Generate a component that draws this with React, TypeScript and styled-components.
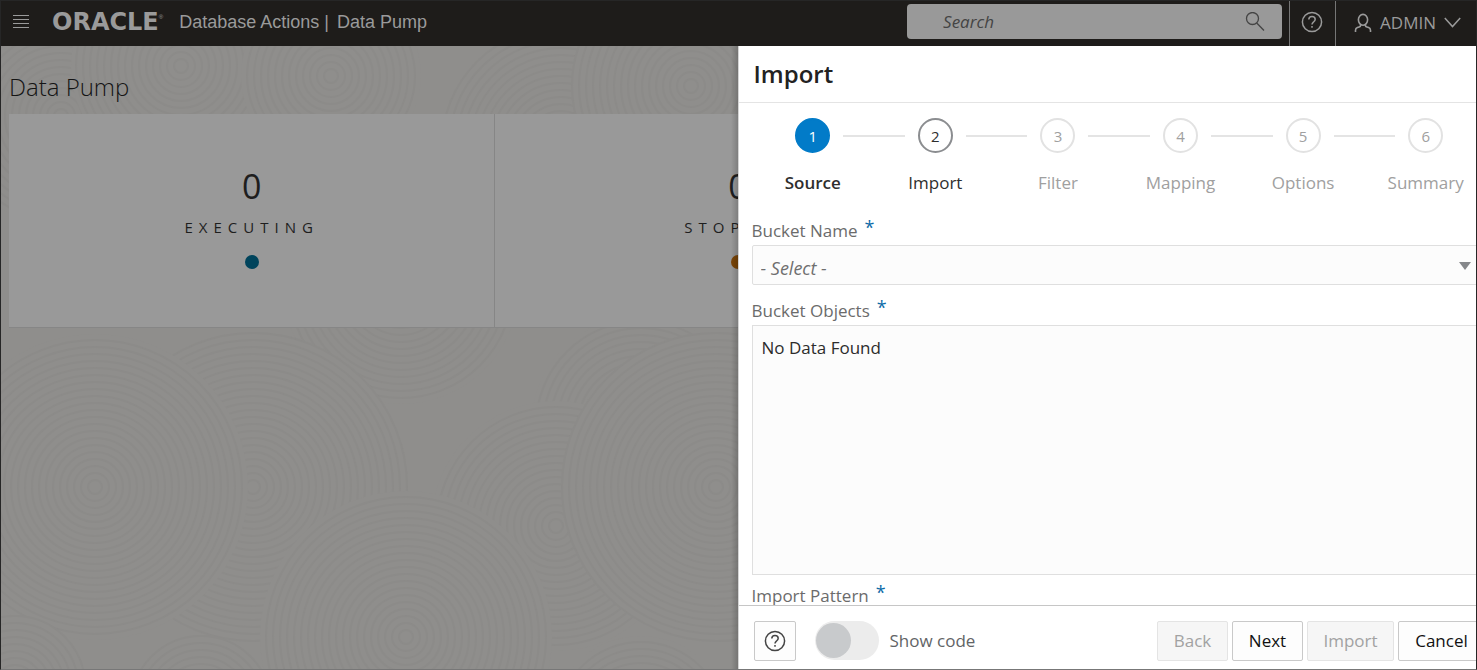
import React from "react";
import styled, { createGlobalStyle, css } from "styled-components";

const GlobalStyle = createGlobalStyle`
  *, *::before, *::after { box-sizing: border-box; }
  body {
    margin: 0;
    font-family: "Open Sans", "Noto Sans", sans-serif;
    font-size: 17px;
    line-height: 24px;
    color: #222;
  }
  button, input, select { font: inherit; color: inherit; margin: 0; }
`;

/* ---------- page frame ---------- */

const Page = styled.div`
  position: relative;
  display: flex;
  flex-direction: column;
  min-height: 100vh;
  overflow: hidden;
  border: 1px solid #262626;
  border-bottom-color: #777;
  background: #8f8e8c;
`;

const TopBar = styled.header`
  display: flex;
  align-items: stretch;
  height: 45px;
  background: #1e1c1a;
  color: #9a9a9a;
`;

const MenuButton = styled.button`
  display: flex;
  align-items: center;
  padding: 0 12px 4px;
  border: 0;
  background: none;
`;

const Brand = styled.div`
  display: flex;
  align-items: center;
  flex: 1;
  padding-left: 10px;
  padding-bottom: 4px;
  font-family: "Liberation Sans", Arial, sans-serif;
  font-size: 18px;
  white-space: nowrap;
`;

const Wordmark = styled.span`
  font-family: "DejaVu Sans", sans-serif;
  font-size: 24px;
  font-weight: 700;
`;

const Registered = styled.sup`
  align-self: flex-start;
  margin-right: 16px;
  font-size: 6px;
  line-height: 32px;
`;

const AppName = styled.span`
  margin-right: 8px;
`;

const SearchBox = styled.label`
  display: flex;
  align-items: center;
  align-self: flex-start;
  width: 375px;
  height: 35px;
  margin: 3px 7px 0 0;
  padding: 0 17px 0 36px;
  border-radius: 4px;
  background: #999;
  color: #444;
`;

const SearchInput = styled.input`
  flex: 1;
  min-width: 0;
  padding: 0;
  border: 0;
  outline: 0;
  background: none;
  font-style: italic;
  &::placeholder { color: #444; opacity: 1; }
`;

const BarButton = styled.button`
  display: flex;
  align-items: center;
  gap: 8px;
  padding: 0 12px 4px 11px;
  border: 0;
  border-left: 1px solid #767676;
  background: none;
`;

const UserButton = styled(BarButton)`
  padding: 0 15px 2px 18px;
`;

/* ---------- dashboard ---------- */

const Dashboard = styled.main`
  position: relative;
  flex: 1;
  padding: 24px 8px 0;
`;

const Backdrop = styled.svg`
  position: absolute;
  inset: 0;
  width: 100%;
  height: 100%;
`;

const PageTitle = styled.h1`
  position: relative;
  margin: 0 0 10px;
  font-size: 24px;
  line-height: 34px;
  font-weight: 300;
  color: #141414;
`;

const Cards = styled.section`
  position: relative;
  display: grid;
  grid-template-columns: repeat(3, 1fr);
`;

const Card = styled.article`
  display: flex;
  flex-direction: column;
  align-items: center;
  height: 214px;
  padding-top: 52px;
  border-right: 1px solid #868686;
  border-bottom: 1px solid #868686;
  background: #999;
  color: #1e1e1e;
`;

const Count = styled.strong`
  font-size: 34px;
  line-height: 40px;
  font-weight: 400;
`;

const CardLabel = styled.span`
  margin-top: 9px;
  font-size: 15px;
  letter-spacing: 6px;
`;

const Dot = styled.i<{ $color: string }>`
  width: 14px;
  height: 14px;
  margin-top: 16px;
  border-radius: 50%;
  background: ${(p) => p.$color};
`;

/* ---------- import drawer ---------- */

const Drawer = styled.aside`
  position: absolute;
  top: 45px;
  right: 0;
  bottom: 0;
  display: flex;
  flex-direction: column;
  width: calc(50% + 1px);
  overflow: hidden;
  border-left: 1px solid #d4d4d4;
  background: #fff;
`;

const DrawerShade = styled.div`
  position: absolute;
  top: 45px;
  right: 50%;
  bottom: 0;
  width: 8px;
  background: linear-gradient(to right, rgba(0, 0, 0, 0), rgba(0, 0, 0, 0.2));
`;

const DrawerTitle = styled.h2`
  flex: none;
  margin: 0;
  padding: 12px 15px;
  border-bottom: 1px solid #e4e4e4;
  font-size: 24px;
  line-height: 32px;
  font-weight: 600;
`;

const Steps = styled.ol`
  display: flex;
  flex: none;
  margin: 0 -11px 0 13px;
  padding: 15px 0 0;
  list-style: none;
`;

type StepState = "current" | "next" | "later";

const Step = styled.li<{ $state: StepState }>`
  flex: 1;
  text-align: center;
  color: ${(p) => (p.$state === "later" ? "#a0a0a0" : "#2e2e2e")};
  font-weight: ${(p) => (p.$state === "current" ? 600 : 400)};
`;

const StepTrack = styled.div`
  display: flex;
  align-items: center;
  gap: 13px;
  margin-bottom: 18px;
`;

const TrackLine = styled.span<{ $hidden: boolean }>`
  flex: 1;
  height: 2px;
  background: ${(p) => (p.$hidden ? "transparent" : "#e4e4e4")};
`;

const StepNumber = styled.span<{ $state: StepState }>`
  width: 35px;
  height: 35px;
  border: 2px solid #e2e2e2;
  border-radius: 50%;
  font-size: 15px;
  line-height: 33px;
  font-weight: 400;
  ${(p) => p.$state === "next" && css`border-color: #8b8d90;`}
  ${(p) => p.$state === "current" && css`
    border-color: #027bc8;
    background: #027bc8;
    color: #fff;
  `}
`;

const Form = styled.form`
  flex: 1 1 0;
  min-height: 0;
  overflow: hidden;
  padding: 24px 0 0 13px;
`;

const Field = styled.div`
  margin-right: -3px;
`;

const FieldLabel = styled.label`
  display: flex;
  gap: 7px;
  height: 26px;
  color: #6b6b6b;
`;

const Required = styled.span`
  color: #0e6ba8;
  font-size: 18px;
  line-height: 16px;
`;

const SelectWrap = styled.div`
  display: flex;
  align-items: center;
  height: 40px;
  margin-bottom: 14px;
  padding-right: 7px;
  border: 1px solid #dfdfdf;
  border-radius: 2px;
  background: #fcfcfc;
`;

const Select = styled.select`
  flex: 1;
  height: 100%;
  padding: 5px 8px 0;
  border: 0;
  outline: 0;
  appearance: none;
  background: none;
  color: #6f6f6f;
  font-size: 18px;
  font-style: italic;
`;

const ObjectList = styled.output`
  display: block;
  height: 250px;
  margin-bottom: 9px;
  padding: 10px 9px;
  border: 1px solid #dfdfdf;
  background: #fcfcfc;
  color: #2c2c2c;
`;

const Footer = styled.footer`
  display: flex;
  flex: none;
  align-items: center;
  gap: 4px;
  height: 64px;
  margin-right: -9px;
  padding: 8px 0 2px 15px;
  border-top: 1px solid #c6c6c6;
`;

const Button = styled.button<{ $wide?: boolean }>`
  display: flex;
  align-items: center;
  justify-content: center;
  min-width: ${(p) => (p.$wide ? 87 : 71)}px;
  height: 40px;
  padding: 0;
  border: 1px solid #c9c9c9;
  border-radius: 2px;
  background: #fdfdfd;
  color: #111;
  &:disabled {
    border-color: #e4e4e4;
    background: #f6f6f6;
    color: #a2a2a2;
  }
`;

const HelpButton = styled(Button)`
  min-width: 42px;
  margin-right: 15px;
  color: #444;
`;

const Toggle = styled.label`
  display: flex;
  align-items: center;
  gap: 11px;
  margin-right: auto;
  color: #626466;
`;

const Switch = styled.input`
  display: flex;
  align-items: center;
  appearance: none;
  width: 64px;
  height: 39px;
  padding: 1px;
  border-radius: 20px;
  background: #ececec;
  &::before {
    content: "";
    width: 35px;
    height: 35px;
    border-radius: 50%;
    background: #c8cacc;
  }
  &:checked { justify-content: flex-end; }
`;

/* ---------- drawings ---------- */

const HelpIcon = ({ size = 22 }: { size?: number }) => (
  <svg width={size} height={size} viewBox="0 0 22 22" fill="none" stroke="currentColor" strokeWidth="1.5">
    <circle cx="11" cy="11" r="9.6" />
    <path d="M7.8 8.6c0-2 1.4-3.2 3.2-3.2s3.2 1.2 3.2 2.900c0 1.500-.9 2.100-1.800 2.800-.9.7-1.400 1.200-1.400 2.500" />
    <path d="M11 15v1.700" />
  </svg>
);

const MenuIcon = () => (
  <svg width="17" height="14" viewBox="0 0 17 14" fill="none" stroke="currentColor">
    <path d="M0 .5h16M0 4.500h16M0 8.500h16M0 12.500h16" />
  </svg>
);

const SearchIcon = () => (
  <svg width="20" height="20" viewBox="0 0 20 20" fill="none" stroke="currentColor" strokeWidth="1.300">
    <circle cx="7.500" cy="6.500" r="6" />
    <path d="M11.700 11l7.300 7.500" />
  </svg>
);

const UserIcon = () => (
  <svg width="18" height="20" viewBox="0 0 18 20" fill="none" stroke="currentColor" strokeWidth="1.600">
    <ellipse cx="9" cy="6.800" rx="4.600" ry="5.400" />
    <path d="M6.600 11.600c.2 1.300-.3 2-1.500 2.400l-1.700.6c-1.300.5-1.900 1.300-1.900 2.600V19M11.400 11.600c-.2 1.300.3 2 1.500 2.400l1.700.6c1.300.5 1.900 1.300 1.900 2.600V19" />
  </svg>
);

const ChevronIcon = () => (
  <svg width="17" height="11" viewBox="0 0 17 11" fill="none" stroke="currentColor" strokeWidth="1.500">
    <path d="M.8 1l7.700 8.600L16.200 1" />
  </svg>
);

const TriangleIcon = () => (
  <svg width="12" height="10" viewBox="0 0 12 10" fill="#85878a">
    <path d="M0 2h12L6 10z" />
  </svg>
);

const ripples = [
  { x: 60, y: 70, r: 110 },
  { x: 560, y: 100, r: 120 },
  { x: 180, y: 20, r: 110 },
  { x: 400, y: 240, r: 118 },
  { x: 330, y: 30, r: 90 },
  { x: 690, y: 40, r: 120 },
  { x: 640, y: 380, r: 110 },
  { x: 555, y: 480, r: 125 },
  { x: 715, y: 441, r: 155 },
  { x: 252, y: 441, r: 155 },
  { x: 94, y: 441, r: 153 },
  { x: 405, y: 591, r: 146 },
  { x: 14, y: 640, r: 70 },
  { x: 200, y: 660, r: 70 },
  { x: 640, y: 680, r: 90 },
];

const RippleBackdrop = () => (
  <Backdrop aria-hidden="true">
    {ripples.map((c) => (
      <g key={`${c.x}-${c.y}`} fill="none" stroke="#8c8b89" strokeWidth="2">
        <circle cx={c.x} cy={c.y} r={c.r} fill="#8f8e8c" stroke="none" />
        {Array.from({ length: Math.floor(c.r / 7) }, (_, i) => (
          <circle key={i} cx={c.x} cy={c.y} r={(i + 1) * 7} />
        ))}
      </g>
    ))}
  </Backdrop>
);

/* ---------- data ---------- */

const cards = [
  { label: "EXECUTING", count: 0, color: "#00445c" },
  { label: "STOPPED", count: 0, color: "#7a4508" },
  { label: "COMPLETED", count: 0, color: "#35521f" },
];

const steps: { label: string; state: StepState }[] = [
  { label: "Source", state: "current" },
  { label: "Import", state: "next" },
  { label: "Filter", state: "later" },
  { label: "Mapping", state: "later" },
  { label: "Options", state: "later" },
  { label: "Summary", state: "later" },
];

export default function App() {
  return (
    <>
      <GlobalStyle />
      <Page>
        <TopBar>
          <MenuButton type="button" aria-label="Menu">
            <MenuIcon />
          </MenuButton>
          <Brand>
            <Wordmark>ORACLE</Wordmark>
            <Registered>®</Registered>
            <AppName>Database Actions |</AppName>
            <span>Data Pump</span>
          </Brand>
          <SearchBox>
            <SearchInput type="text" placeholder="Search" aria-label="Search" />
            <SearchIcon />
          </SearchBox>
          <BarButton type="button" aria-label="Help">
            <HelpIcon />
          </BarButton>
          <UserButton type="button">
            <UserIcon />
            ADMIN
            <ChevronIcon />
          </UserButton>
        </TopBar>

        <Dashboard>
          <RippleBackdrop />
          <PageTitle>Data Pump</PageTitle>
          <Cards>
            {cards.map((card) => (
              <Card key={card.label}>
                <Count>{card.count}</Count>
                <CardLabel>{card.label}</CardLabel>
                <Dot $color={card.color} />
              </Card>
            ))}
          </Cards>
        </Dashboard>

        <DrawerShade />
        <Drawer aria-labelledby="drawer-title">
          <DrawerTitle id="drawer-title">Import</DrawerTitle>
          <Steps>
            {steps.map((step, i) => (
              <Step key={step.label} $state={step.state}>
                <StepTrack>
                  <TrackLine $hidden={i === 0} />
                  <StepNumber $state={step.state}>{i + 1}</StepNumber>
                  <TrackLine $hidden={i === steps.length - 1} />
                </StepTrack>
                {step.label}
              </Step>
            ))}
          </Steps>
          <Form>
            <Field>
              <FieldLabel htmlFor="bucket">
                Bucket Name <Required>*</Required>
              </FieldLabel>
              <SelectWrap>
                <Select id="bucket" required>
                  <option>- Select -</option>
                </Select>
                <TriangleIcon />
              </SelectWrap>
            </Field>
            <Field>
              <FieldLabel htmlFor="objects">
                Bucket Objects <Required>*</Required>
              </FieldLabel>
              <ObjectList id="objects">No Data Found</ObjectList>
            </Field>
            <Field>
              <FieldLabel as="div">
                Import Pattern <Required>*</Required>
              </FieldLabel>
            </Field>
          </Form>
          <Footer>
            <HelpButton type="button" aria-label="Help">
              <HelpIcon />
            </HelpButton>
            <Toggle>
              <Switch type="checkbox" role="switch" />
              Show code
            </Toggle>
            <Button type="button" disabled>Back</Button>
            <Button type="button">Next</Button>
            <Button type="button" $wide disabled>Import</Button>
            <Button type="button" $wide>Cancel</Button>
          </Footer>
        </Drawer>
      </Page>
    </>
  );
}
